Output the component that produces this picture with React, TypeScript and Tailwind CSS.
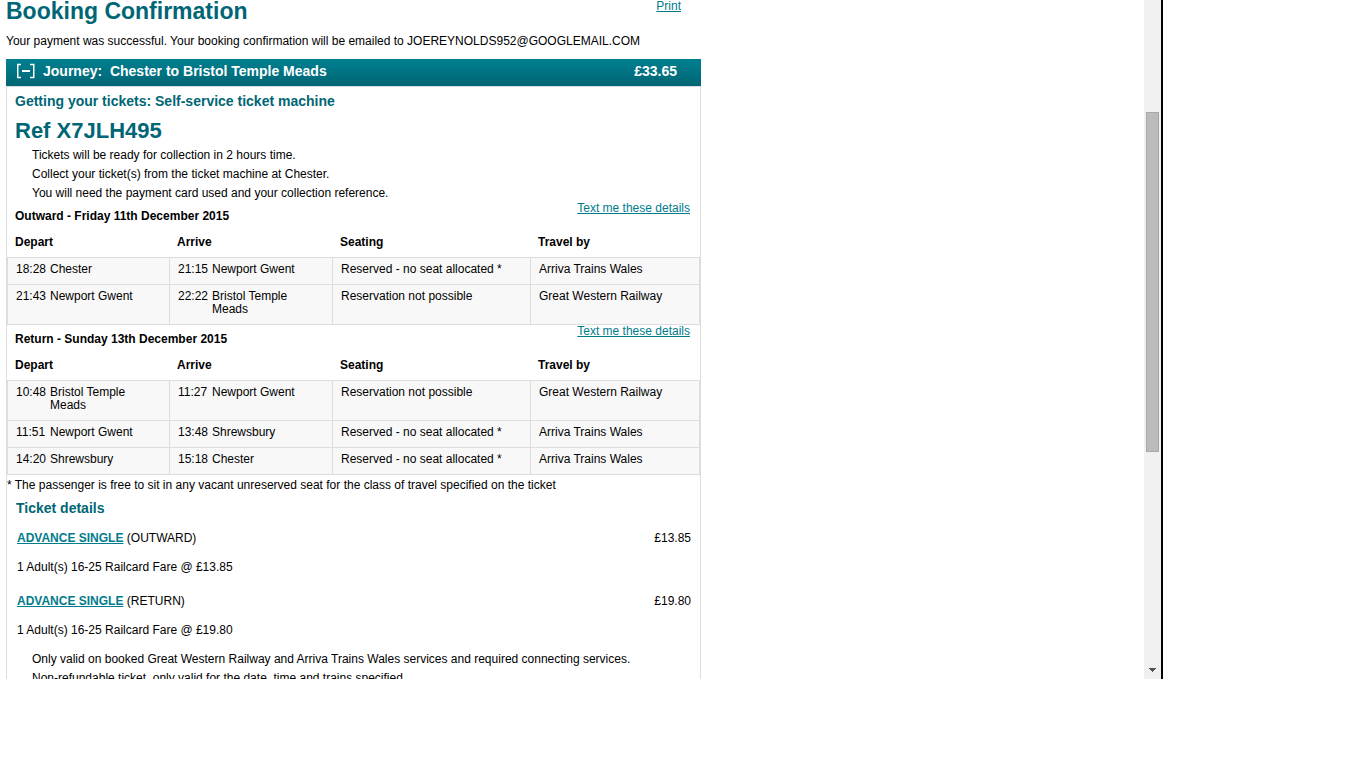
type Leg = {
  depart: [string, string];
  arrive: [string, string];
  seating: string;
  operator: string;
};

const outward: Leg[] = [
  {
    depart: ["18:28", "Chester"],
    arrive: ["21:15", "Newport Gwent"],
    seating: "Reserved - no seat allocated *",
    operator: "Arriva Trains Wales",
  },
  {
    depart: ["21:43", "Newport Gwent"],
    arrive: ["22:22", "Bristol Temple Meads"],
    seating: "Reservation not possible",
    operator: "Great Western Railway",
  },
];

const inbound: Leg[] = [
  {
    depart: ["10:48", "Bristol Temple Meads"],
    arrive: ["11:27", "Newport Gwent"],
    seating: "Reservation not possible",
    operator: "Great Western Railway",
  },
  {
    depart: ["11:51", "Newport Gwent"],
    arrive: ["13:48", "Shrewsbury"],
    seating: "Reserved - no seat allocated *",
    operator: "Arriva Trains Wales",
  },
  {
    depart: ["14:20", "Shrewsbury"],
    arrive: ["15:18", "Chester"],
    seating: "Reserved - no seat allocated *",
    operator: "Arriva Trains Wales",
  },
];

const tdClass = "border-l border-t border-[#dddddd] px-2 pt-[5px] pb-2 align-top";

function Stop({ stop }: { stop: [string, string] }) {
  return (
    <div className="flex">
      <span className="w-[34px] shrink-0">{stop[0]}</span>
      <span className="max-w-[100px]">{stop[1]}</span>
    </div>
  );
}

function JourneyLegs({ title, legs }: { title: string; legs: Leg[] }) {
  return (
    <section>
      <div className="flex items-start justify-between pr-[10px] pl-2">
        <h4 className="pt-2 font-bold">{title}</h4>
        <a href="#text" className="text-[#007c8c] underline">
          Text me these details
        </a>
      </div>
      <table className="w-full table-fixed border-separate border-spacing-0 text-left">
        <colgroup>
          <col className="w-[162px]" />
          <col className="w-[163px]" />
          <col className="w-[198px]" />
          <col />
        </colgroup>
        <thead>
          <tr>
            <th className="px-2 pt-[13px] pb-2">Depart</th>
            <th className="px-2 pt-[13px] pb-2">Arrive</th>
            <th className="px-2 pt-[13px] pb-2">Seating</th>
            <th className="px-2 pt-[13px] pb-2">Travel by</th>
          </tr>
        </thead>
        <tbody className="bg-[#f8f8f8]">
          {legs.map((leg, i) => {
            const bottom = i === legs.length - 1 ? " border-b" : "";
            return (
              <tr key={leg.depart[0]}>
                <td className={tdClass + bottom}>
                  <Stop stop={leg.depart} />
                </td>
                <td className={tdClass + bottom}>
                  <Stop stop={leg.arrive} />
                </td>
                <td className={tdClass + bottom}>{leg.seating}</td>
                <td className={tdClass + " border-r" + bottom}>{leg.operator}</td>
              </tr>
            );
          })}
        </tbody>
      </table>
    </section>
  );
}

function Ticket({ direction, price }: { direction: string; price: string }) {
  return (
    <div className="pr-[9px] pl-[10px]">
      <div className="flex justify-between">
        <p>
          <a href="#advance-single" className="font-bold text-[#007c8c] underline">
            ADVANCE SINGLE
          </a>{" "}
          ({direction})
        </p>
        <span>{price}</span>
      </div>
      <p className="mt-4">1 Adult(s) 16-25 Railcard Fare @ {price}</p>
    </div>
  );
}

function Scrollbar() {
  return (
    <div className="flex w-[17px] shrink-0 flex-col justify-between bg-[#f0f0f0]" aria-hidden="true">
      <div className="mx-auto mt-28 h-1/2 w-[13px] border border-[#a8a8a8] bg-[#bbbbbb]" />
      <svg className="mx-auto mb-[7px]" width="7" height="4" viewBox="0 0 7 4" shapeRendering="crispEdges">
        <path d="M0 0h7v1H6v1H5v1H4v1H3V3H2V2H1V1H0z" fill="#505050" />
      </svg>
    </div>
  );
}

export default function App() {
  return (
    <div className="flex h-screen bg-white pr-[203px] pb-[89px] font-['Liberation_Sans',Arial,sans-serif] text-[12px] leading-[13px] text-black">
      <main className="min-w-0 flex-1 overflow-hidden pl-[6px]">
        <div className="max-w-[695px]">
          <header className="flex items-start justify-between pr-5">
            <h1 className="text-[23px] leading-[22px] font-bold text-[#006675]">Booking Confirmation</h1>
            <a href="#print" className="text-[#007c8c] underline">
              Print
            </a>
          </header>
          <p className="mt-[13px]">
            Your payment was successful. Your booking confirmation will be emailed to JOEREYNOLDS952@GOOGLEMAIL.COM
          </p>
          <div className="mt-[11px] flex h-[27px] items-center bg-linear-to-b from-[#007f90] to-[#006674] pr-6 pl-[10px] text-[14px] font-bold text-white">
            <button type="button" aria-label="Collapse journey" className="mr-2 pb-1">
              <svg width="19" height="16" viewBox="0 0 19 16">
                <path d="M5 1.5H1.75v13H5M14 1.5h3.75v13H14" fill="none" stroke="currentColor" strokeWidth="1.5" />
                <path d="M6 8h8" fill="none" stroke="currentColor" strokeWidth="2" />
              </svg>
            </button>
            <h2 className="flex-1 whitespace-pre pb-[2px]">{"Journey:  Chester to Bristol Temple Meads"}</h2>
            <span className="pb-[2px]">£33.65</span>
          </div>

          <div className="border border-b-0 border-[#dddddd]">
            <div className="pt-[5px] pl-2">
              <h3 className="text-[14px] leading-[19px] font-bold text-[#006675]">
                Getting your tickets: Self-service ticket machine
              </h3>
              <p className="mt-2 text-[22px] leading-[24px] font-bold text-[#006675]">Ref X7JLH495</p>
              <ul className="mt-[3px] -mb-px pl-[17px] leading-[19px]">
                <li>Tickets will be ready for collection in 2 hours time.</li>
                <li>Collect your ticket(s) from the ticket machine at Chester.</li>
                <li>You will need the payment card used and your collection reference.</li>
              </ul>
            </div>
            <JourneyLegs title="Outward - Friday 11th December 2015" legs={outward} />
            <JourneyLegs title="Return - Sunday 13th December 2015" legs={inbound} />
            <p className="mt-1">* The passenger is free to sit in any vacant unreserved seat for the class of travel specified on the ticket</p>
            <h3 className="mt-[7px] mb-[14px] pl-[9px] text-[14px] leading-[19px] font-bold text-[#006675]">
              Ticket details
            </h3>
            <Ticket direction="OUTWARD" price="£13.85" />
            <div className="mt-[21px]">
              <Ticket direction="RETURN" price="£19.80" />
            </div>
            <ul className="mt-[13px] pl-[25px] leading-[19px]">
              <li>Only valid on booked Great Western Railway and Arriva Trains Wales services and required connecting services.</li>
              <li>Non-refundable ticket, only valid for the date, time and trains specified.</li>
            </ul>
          </div>
        </div>
      </main>
      <Scrollbar />
      <div className="w-[2px] shrink-0 bg-black" />
    </div>
  );
}
